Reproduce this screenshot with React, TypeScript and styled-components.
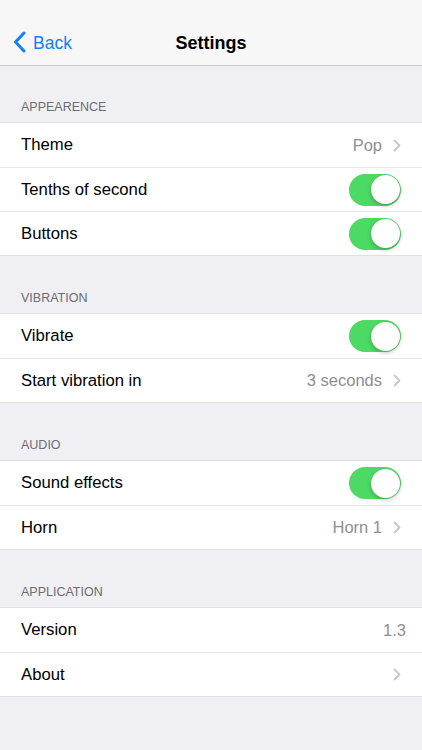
import styled, { createGlobalStyle } from 'styled-components';

const GlobalStyle = createGlobalStyle`
  html, body {
    margin: 0;
    padding: 0;
    background: #efeff4;
  }
  body {
    font-family: 'Liberation Sans', Arial, sans-serif;
    -webkit-font-smoothing: antialiased;
  }
`;

type Row =
  | { label: string; kind: 'toggle' }
  | { label: string; kind: 'link'; value?: string }
  | { label: string; kind: 'value'; value: string };

const sections: { title: string; rows: Row[] }[] = [
  {
    title: 'APPEARENCE',
    rows: [
      { label: 'Theme', kind: 'link', value: 'Pop' },
      { label: 'Tenths of second', kind: 'toggle' },
      { label: 'Buttons', kind: 'toggle' },
    ],
  },
  {
    title: 'VIBRATION',
    rows: [
      { label: 'Vibrate', kind: 'toggle' },
      { label: 'Start vibration in', kind: 'link', value: '3 seconds' },
    ],
  },
  {
    title: 'AUDIO',
    rows: [
      { label: 'Sound effects', kind: 'toggle' },
      { label: 'Horn', kind: 'link', value: 'Horn 1' },
    ],
  },
  {
    title: 'APPLICATION',
    rows: [
      { label: 'Version', kind: 'value', value: '1.3' },
      { label: 'About', kind: 'link' },
    ],
  },
];

const BackChevron = () => (
  <svg width="13" height="22" viewBox="0 0 13 22">
    <path d="M11 2 L2.5 11 L11 20" fill="none" stroke="#147efb" strokeWidth="3" strokeLinecap="round" strokeLinejoin="round" />
  </svg>
);

const Chevron = () => (
  <svg width="8" height="13" viewBox="0 0 8 13">
    <path d="M1.5 1.5 L6.5 6.5 L1.5 11.5" fill="none" stroke="#c7c7cc" strokeWidth="1.8" strokeLinecap="round" strokeLinejoin="round" />
  </svg>
);

const SettingsPage = () => {
  return (
    <Page>
      <GlobalStyle />
      <NavBar>
        <BackButton>
          <BackChevron />
          <span>Back</span>
        </BackButton>
        <NavTitle>Settings</NavTitle>
      </NavBar>
      {sections.map((section) => (
        <Section key={section.title}>
          <SectionHeader>{section.title}</SectionHeader>
          <Group>
            {section.rows.map((row) => (
              <Cell key={row.label}>
                <Label>{row.label}</Label>
                {row.kind === 'toggle' && (
                  <Toggle>
                    <Knob />
                  </Toggle>
                )}
                {row.kind === 'link' && (
                  <Accessory>
                    {row.value && <Detail>{row.value}</Detail>}
                    <Chevron />
                  </Accessory>
                )}
                {row.kind === 'value' && <Detail $plain>{row.value}</Detail>}
              </Cell>
            ))}
          </Group>
        </Section>
      ))}
    </Page>
  );
};

const Page = styled.div`
  width: 422px;
  min-height: 750px;
  background: #efeff4;
`;

const NavBar = styled.div`
  position: relative;
  height: 66px;
  box-sizing: border-box;
  padding-top: 21px;
  background: #f7f7f7;
  border-bottom: 1px solid #c8c7cc;
  display: flex;
  align-items: center;
  justify-content: center;
`;

const BackButton = styled.div`
  position: absolute;
  left: 13px;
  top: 21px;
  bottom: 0;
  display: flex;
  align-items: center;
  gap: 7px;
  color: #147efb;
  font-size: 17.5px;
  svg {
    position: relative;
    top: -1px;
  }
`;

const NavTitle = styled.div`
  font-size: 18px;
  font-weight: 700;
  color: #000;
`;

const Section = styled.div`
  padding-top: 34px;
  ${NavBar} + & {
    padding-top: 33px;
  }
`;

const SectionHeader = styled.div`
  padding: 0 21px 7px;
  height: 16px;
  line-height: 16px;
  font-size: 12.5px;
  color: #6d6d72;
`;

const Group = styled.div`
  background: #fff;
  border-top: 1px solid #e0e0e4;
  border-bottom: 1px solid #e0e0e4;
`;

const Cell = styled.div`
  position: relative;
  box-sizing: border-box;
  height: 44px;
  display: flex;
  align-items: center;
  justify-content: space-between;
  padding: 0 21px;
  & + & {
    border-top: 1px solid #e6e6ea;
  }
`;

const Label = styled.div`
  font-size: 16.7px;
  color: #000;
`;

const Accessory = styled.div`
  display: flex;
  align-items: center;
  gap: 11px;
`;

const Detail = styled.div<{ $plain?: boolean }>`
  font-size: 16.5px;
  color: #8e8e93;
  margin-right: ${(p) => (p.$plain ? '-5px' : '0')};
`;

const Toggle = styled.div`
  position: relative;
  width: 52px;
  height: 32px;
  border-radius: 16px;
  background: #4cd964;
`;

const Knob = styled.div`
  position: absolute;
  top: 1.5px;
  right: 1.5px;
  width: 29px;
  height: 29px;
  border-radius: 50%;
  background: #fff;
  box-shadow: 0 2px 4px rgba(0, 0, 0, 0.22), 0 0 1px rgba(0, 0, 0, 0.15);
`;

export default SettingsPage;
